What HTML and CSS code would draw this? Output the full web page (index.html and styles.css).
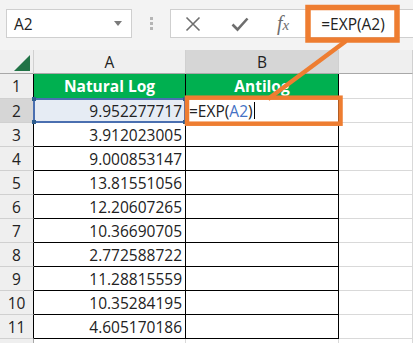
FILE: index.html
```html
<!DOCTYPE html>
<html lang="en">
<head>
    <meta charset="UTF-8">
    <title>EXP formula</title>
    <link rel="stylesheet" href="styles.css">
</head>
<body>

    <div class="toolbar">
        <div class="name-box">
            <span>A2</span>
            <svg class="caret" width="8" height="5" viewBox="0 0 8 5"><path d="M0 0 H8 L4 5 Z" fill="#7a7a7a"/></svg>
        </div>
        <div class="grip"><i></i><i></i><i></i></div>
        <div class="formula-bar">
            <svg class="ico" width="16" height="16" viewBox="0 0 16 16"><path d="M1.5 1.5 L14.5 14.5 M14.5 1.5 L1.5 14.5" stroke="#6e6e6e" stroke-width="1.6" fill="none"/></svg>
            <svg class="ico" width="18" height="16" viewBox="0 0 18 16"><path d="M1.5 8.5 L6.5 13.5 L16.5 2.5" stroke="#6e6e6e" stroke-width="2.6" fill="none"/></svg>
            <span class="fx">f<sub>x</sub></span>
            <span class="formula-text">=EXP(A2)</span>
        </div>
    </div>

    <div class="sheet">
        <!-- column headers -->
        <div class="corner"><svg width="16" height="16" viewBox="0 0 16 16"><path d="M16 0 V16 H0 Z" fill="#217346"/></svg></div>
        <div class="col-head">A</div>
        <div class="col-head sel">B</div>
        <div class="col-head"></div>

        <!-- row 1 -->
        <div class="row-head tb">1</div>
        <div class="cell tb green">Natural Log</div>
        <div class="cell tb green">Antilog</div>
        <div class="cell"></div>

        <!-- row 2 -->
        <div class="row-head tb sel">2</div>
        <div class="cell tb num ref">9.952277717
            <div class="ref-box"><i class="h tl"></i><i class="h tr"></i><i class="h bl"></i><i class="h br"></i></div>
        </div>
        <div class="cell tb edit">=EXP(<span class="ref-text">A2</span>)<span class="cursor"></span></div>
        <div class="cell"></div>

        <div class="row-head tb">3</div><div class="cell tb num">3.912023005</div><div class="cell tb"></div><div class="cell"></div>
        <div class="row-head tb">4</div><div class="cell tb num">9.000853147</div><div class="cell tb"></div><div class="cell"></div>
        <div class="row-head tb">5</div><div class="cell tb num">13.81551056</div><div class="cell tb"></div><div class="cell"></div>
        <div class="row-head tb">6</div><div class="cell tb num">12.20607265</div><div class="cell tb"></div><div class="cell"></div>
        <div class="row-head tb">7</div><div class="cell tb num">10.36690705</div><div class="cell tb"></div><div class="cell"></div>
        <div class="row-head tb">8</div><div class="cell tb num">2.772588722</div><div class="cell tb"></div><div class="cell"></div>
        <div class="row-head tb">9</div><div class="cell tb num">11.28815559</div><div class="cell tb"></div><div class="cell"></div>
        <div class="row-head tb">10</div><div class="cell tb num">10.35284195</div><div class="cell tb"></div><div class="cell"></div>
        <div class="row-head tb">11</div><div class="cell tb num">4.605170186</div><div class="cell tb"></div><div class="cell"></div>

        <!-- next row, only its top edge is in view -->
        <div class="row-head"></div><div class="cell"></div><div class="cell"></div><div class="cell"></div>
    </div>

    <!-- orange callout drawn over the sheet -->
    <svg class="callout" width="413" height="343" viewBox="0 0 413 343">
        <line x1="346" y1="41" x2="268" y2="99" stroke="#ee7d31" stroke-width="4.5"/>
        <rect x="308" y="7.5" width="89" height="32.5" fill="none" stroke="#ee7d31" stroke-width="5.5"/>
        <rect x="187" y="97.7" width="153.5" height="26" fill="none" stroke="#ee7d31" stroke-width="4.5"/>
    </svg>

</body>
</html>
```

FILE: styles.css
```css
body {
    margin: 0;
    width: 413px;
    height: 343px;
    overflow: hidden;
    position: relative;
    font-family: 'Open Sans', sans-serif;
    font-size: 15.5px;
    color: #222;
    background-color: #fff;
}

.toolbar {
    height: 50px;
    box-sizing: border-box;
    padding-top: 9px;
    display: flex;
    align-items: flex-start;
    background-color: #f3f3f3;
}

.name-box {
    width: 126px;
    height: 29px;
    margin-left: 6px;
    box-sizing: border-box;
    border: 1px solid #cfcfcf;
    background-color: #fff;
    display: flex;
    align-items: center;
    justify-content: space-between;
    padding: 0 9px 0 7px;
}

.grip {
    width: 38px;
    height: 29px;
    display: flex;
    flex-direction: column;
    align-items: center;
    justify-content: center;
    gap: 2px;
}

.grip i {
    width: 3px;
    height: 3px;
    background-color: #b5b5b5;
}

.formula-bar {
    flex: 1;
    height: 29px;
    box-sizing: border-box;
    border: 1px solid #cfcfcf;
    border-right: none;
    background-color: #fff;
    display: flex;
    align-items: center;
    padding-left: 14px;
}

.ico {
    margin-right: 30px;
}

.fx {
    font-family: 'Liberation Serif', serif;
    font-style: italic;
    font-size: 20px;
    color: #6e6e6e;
    margin-left: -2px;
}

.fx sub {
    font-size: 15px;
    vertical-align: 0;
}

.formula-text {
    margin-left: 32px;
}

.sheet {
    display: grid;
    grid-template-columns: 34px 152px 153px 74px;
    grid-template-rows: 24px 25px repeat(10, 24px) 24px;
}

.corner,
.col-head {
    background-color: #efefef;
    border-right: 1px solid #d0d0d0;
    border-bottom: 1px solid #a8a8a8;
    display: flex;
    align-items: center;
    justify-content: center;
}

.corner {
    justify-content: flex-end;
    align-items: flex-end;
    padding: 0 3px 2px 0;
}

.col-head.sel,
.row-head.sel {
    background-color: #d6d6d6;
}

.row-head {
    background-color: #efefef;
    border-right: 1px solid #a8a8a8;
    border-bottom: 1px solid #d0d0d0;
    display: flex;
    align-items: center;
    justify-content: center;
}

.row-head.tb {
    border-right-color: #000;
}

.cell {
    border-right: 1px solid #d9d9d9;
    border-bottom: 1px solid #d9d9d9;
    display: flex;
    align-items: center;
    white-space: nowrap;
    position: relative;
}

.cell.tb {
    border-color: #000;
}

.green {
    background-color: #00b050;
    color: #fff;
    font-weight: bold;
    justify-content: center;
}

.num {
    justify-content: flex-end;
    padding-right: 3px;
}

.ref {
    background-color: #e6ecf4;
}

.ref-box {
    position: absolute;
    left: -1px;
    top: -1px;
    right: -1px;
    bottom: -1px;
    border: 2px solid #4a6fb0;
}

.h {
    position: absolute;
    width: 4px;
    height: 4px;
    background-color: #2f5e8e;
}

.tl { left: -3px; top: -3px; }
.tr { right: -3px; top: -3px; }
.bl { left: -3px; bottom: -3px; }
.br { right: -3px; bottom: -3px; }

.edit {
    padding-left: 3px;
}

.ref-text {
    color: #4472c4;
}

.cursor {
    width: 1px;
    height: 17px;
    background-color: #000;
    margin-left: 1px;
}

.callout {
    position: absolute;
    top: 0;
    left: 0;
    pointer-events: none;
}
```
